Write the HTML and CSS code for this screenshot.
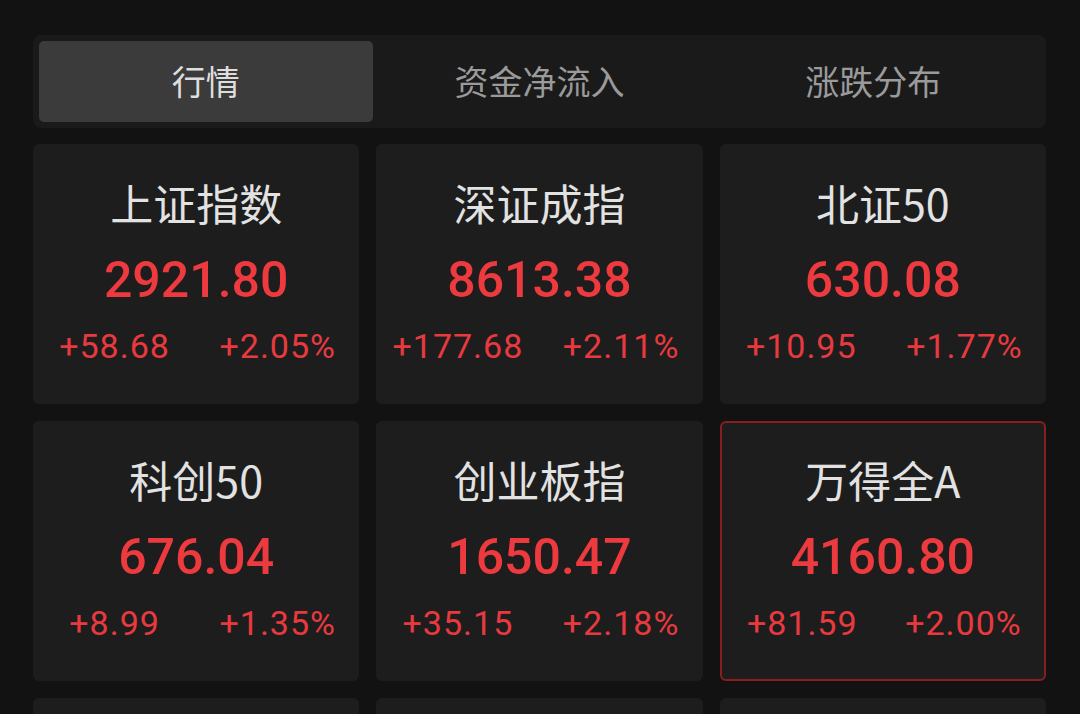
FILE: index.html
```html
<!DOCTYPE html>
<html lang="zh-CN">
<head>
<meta charset="utf-8">
<title>行情</title>
<link rel="stylesheet" href="styles.css">
</head>
<body>
<div class="page">
  <div class="tabs">
    <div class="tab active">行情</div>
    <div class="tab">资金净流入</div>
    <div class="tab">涨跌分布</div>
  </div>
  <div class="grid">
    <div class="card">
      <div class="name">上证指数</div>
      <div class="price">2921.80</div>
      <div class="change"><span>+58.68</span><span>+2.05%</span></div>
    </div>
    <div class="card">
      <div class="name">深证成指</div>
      <div class="price">8613.38</div>
      <div class="change"><span>+177.68</span><span>+2.11%</span></div>
    </div>
    <div class="card">
      <div class="name">北证50</div>
      <div class="price">630.08</div>
      <div class="change"><span>+10.95</span><span>+1.77%</span></div>
    </div>
    <div class="card">
      <div class="name">科创50</div>
      <div class="price">676.04</div>
      <div class="change"><span>+8.99</span><span>+1.35%</span></div>
    </div>
    <div class="card">
      <div class="name">创业板指</div>
      <div class="price">1650.47</div>
      <div class="change"><span>+35.15</span><span>+2.18%</span></div>
    </div>
    <div class="card selected">
      <div class="name">万得全A</div>
      <div class="price">4160.80</div>
      <div class="change"><span>+81.59</span><span>+2.00%</span></div>
    </div>
    <div class="card"></div>
    <div class="card"></div>
    <div class="card"></div>
  </div>
</div>
</body>
</html>
```
FILE: styles.css
```css
* { box-sizing: border-box; }
html, body {
  margin: 0;
  padding: 0;
  background: #121212;
  overflow: hidden;
  height: 714px;
}
.page {
  padding: 35px 34px 0 33px;
  font-family: "Noto Sans CJK SC", "Noto Sans", sans-serif;
}
.tabs {
  display: grid;
  grid-template-columns: repeat(3, 1fr);
  background: #1a1a1a;
  border-radius: 8px;
  padding: 6px;
  height: 93px;
}
.tab {
  display: flex;
  align-items: center;
  justify-content: center;
  font-size: 34px;
  color: #9a9a9a;
  border-radius: 5px;
  padding-bottom: 2px;
}
.tab.active {
  background: #3b3b3b;
  color: #dedede;
}
.grid {
  margin-top: 16px;
  display: grid;
  grid-template-columns: repeat(3, 1fr);
  column-gap: 17px;
  row-gap: 17px;
}
.card {
  height: 260px;
  background: #1d1d1e;
  border-radius: 6px;
  padding-top: 33px;
  display: flex;
  flex-direction: column;
  align-items: center;
}
.card.selected {
  border: 2px solid #8a1e1e;
  padding-top: 31px;
}
.name {
  font-size: 43px;
  line-height: 50px;
  color: #e2e2e2;
  font-family: "Noto Sans CJK SC", sans-serif;
}
.price {
  margin-top: 25px;
  font-family: Roboto, "Liberation Sans", sans-serif;
  font-weight: 500;
  font-size: 50px;
  line-height: 56px;
  color: #ec3a3f;
}
.change {
  margin-top: 18px;
  width: 100%;
  display: grid;
  grid-template-columns: 1fr 1fr;
  font-family: Roboto, "Liberation Sans", sans-serif;
  font-size: 34px;
  letter-spacing: 1px;
  line-height: 40px;
  color: #e83a3e;
}
.change span {
  text-align: center;
}
```
